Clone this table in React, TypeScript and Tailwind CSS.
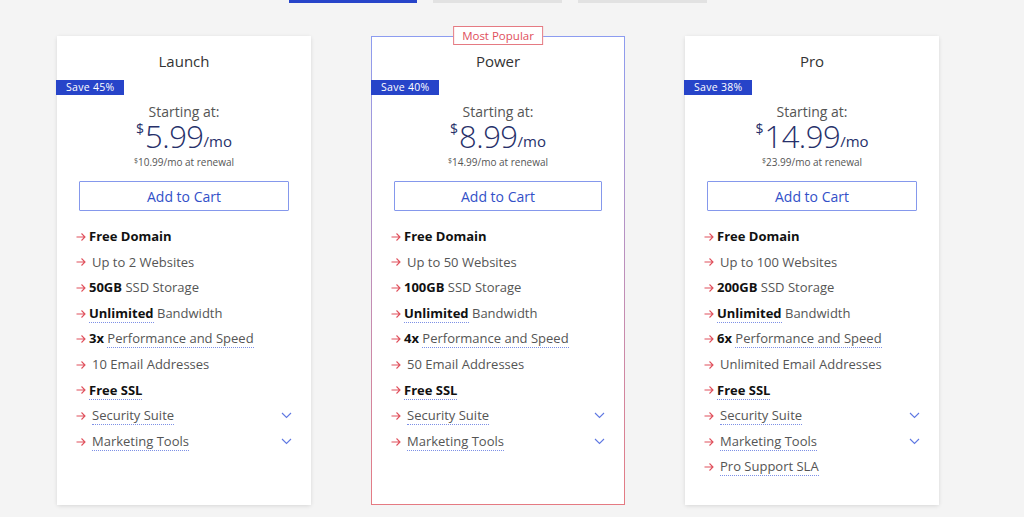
import React from 'react'

type Feature = {
  bold?: string
  text?: string
  boldDotted?: boolean
  textDotted?: boolean
  chevron?: boolean
}

type Plan = {
  name: string
  save: string
  price: string
  renewal: string
  popular?: boolean
  features: Feature[]
}

const FONT = { fontFamily: '"Open Sans", "Noto Sans", sans-serif' }

function common(sites: string, storage: string, speed: string, email: string): Feature[] {
  return [
    { bold: 'Free Domain' },
    { text: sites },
    { bold: storage, text: 'SSD Storage' },
    { bold: 'Unlimited', boldDotted: true, text: 'Bandwidth' },
    { bold: speed, text: 'Performance and Speed', textDotted: true },
    { text: email },
    { bold: 'Free SSL', boldDotted: true },
    { text: 'Security Suite', textDotted: true, chevron: true },
    { text: 'Marketing Tools', textDotted: true, chevron: true },
  ]
}

const PLANS: Plan[] = [
  {
    name: 'Launch',
    save: 'Save 45%',
    price: '5.99',
    renewal: '10.99',
    features: common('Up to 2 Websites', '50GB', '3x', '10 Email Addresses'),
  },
  {
    name: 'Power',
    save: 'Save 40%',
    price: '8.99',
    renewal: '14.99',
    popular: true,
    features: common('Up to 50 Websites', '100GB', '4x', '50 Email Addresses'),
  },
  {
    name: 'Pro',
    save: 'Save 38%',
    price: '14.99',
    renewal: '23.99',
    features: [
      ...common('Up to 100 Websites', '200GB', '6x', 'Unlimited Email Addresses'),
      { text: 'Pro Support SLA', textDotted: true },
    ],
  },
]

function Arrow() {
  return (
    <svg width="10" height="10" viewBox="0 0 10 10" className="shrink-0">
      <path d="M0.5 5H9M5.5 1.5L9 5L5.5 8.5" fill="none" stroke="#e0505c" strokeWidth="1.1" />
    </svg>
  )
}

function Chevron() {
  return (
    <svg width="11" height="7" viewBox="0 0 11 7" className="shrink-0">
      <path d="M1 1L5.5 5.5L10 1" fill="none" stroke="#5f78e2" strokeWidth="1.1" />
    </svg>
  )
}

const dotted = 'border-b border-dotted border-[#7d90e6]'

function FeatureRow({ f }: { f: Feature }) {
  return (
    <li className="flex items-center h-[25.6px]">
      <Arrow />
      <span className={`flex-1 text-[13px] text-[#555] ${f.bold ? 'ml-[3px]' : 'ml-[6px]'}`}>
        {f.bold && (
          <span className={`font-bold text-[#111] ${f.boldDotted ? dotted : ''}`}>{f.bold}</span>
        )}
        {f.bold && f.text ? ' ' : ''}
        {f.text && <span className={f.textDotted ? dotted : ''}>{f.text}</span>}
      </span>
      {f.chevron && <Chevron />}
    </li>
  )
}

function Card({ plan }: { plan: Plan }) {
  const inner = (
    <div className={`relative bg-white h-full ${plan.popular ? 'pt-[14px]' : 'pt-[15px]'}`}>
      <h3 className="text-center text-[15px] leading-[20px] text-[#333]">{plan.name}</h3>
      <div className="mt-[9px] -ml-px w-[68px] h-[15px] bg-[#2744c9] text-white text-[10.5px] leading-[15px] pl-[10px] tracking-[0.3px]">
        {plan.save}
      </div>
      <p className="mt-[9px] text-center text-[14px] leading-[16px] text-[#555]">Starting at:</p>
      <div className="mt-[4px] flex justify-center items-end text-[#27306a] leading-none h-[28px]">
        <span className="text-[14px] self-start mt-[-2px] mr-[1px]">$</span>
        <span className="text-[31px] font-light tracking-[-0.5px]">{plan.price}</span>
        <span className="text-[15px] mb-[3px]">/mo</span>
      </div>
      <p className="mt-[4px] text-center text-[10px] leading-[12px] text-[#555]">
        <sup className="text-[7px]">$</sup>
        {plan.renewal}/mo at renewal
      </p>
      <div className="px-[22px] mt-[13px]">
        <button className="w-full h-[30px] border border-[#8598ec] text-[#3250c8] text-[14px] rounded-[1px]">
          Add to Cart
        </button>
      </div>
      <ul className="mt-[13px] pl-[19px] pr-[19px]">
        {plan.features.map((f, i) => (
          <FeatureRow key={i} f={f} />
        ))}
      </ul>
      {plan.popular && (
        <div className="absolute -top-[11px] left-1/2 -translate-x-1/2 bg-white border border-[#e57a82] text-[#e0505c] text-[11.5px] leading-[17px] px-[8px] whitespace-nowrap">
          Most Popular
        </div>
      )}
    </div>
  )

  if (plan.popular) {
    return (
      <div className="w-[254px] h-[469px] p-px bg-gradient-to-b from-[#8c9cf0] to-[#e57a82]">{inner}</div>
    )
  }
  return (
    <div className="w-[254px] h-[469px] rounded-[3px] shadow-[0_1px_4px_rgba(0,0,0,0.12)]">
      {inner}
    </div>
  )
}

export default function App() {
  return (
    <div className="w-[1024px] h-[517px] bg-[#f4f4f4] overflow-hidden" style={FONT}>
      <div className="flex justify-center gap-[16px] ml-[-29px]">
        <div className="w-[128px] h-[3px] bg-[#2744c9]" />
        <div className="w-[129px] h-[3px] bg-[#e2e2e2]" />
        <div className="w-[129px] h-[3px] bg-[#e2e2e2]" />
      </div>
      <div className="flex gap-[60px] pl-[57px] mt-[33px]">
        {PLANS.map((p) => (
          <Card key={p.name} plan={p} />
        ))}
      </div>
    </div>
  )
}
